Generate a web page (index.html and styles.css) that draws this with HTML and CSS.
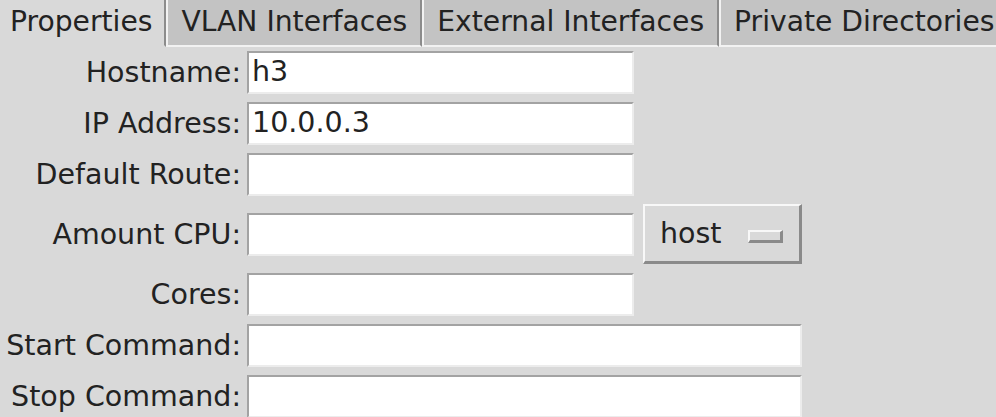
FILE: index.html
```html
<!DOCTYPE html>
<html>
<head>
<meta charset="utf-8">
<link rel="stylesheet" href="styles.css">
</head>
<body>
<div class="dialog">
  <div class="tabs">
    <div class="tab selected">Properties</div>
    <div class="tab">VLAN Interfaces</div>
    <div class="tab">External Interfaces</div>
    <div class="tab">Private Directories</div>
    <div class="tab-fill"></div>
  </div>
  <div class="form">
    <div class="label">Hostname:</div>
    <div class="entry">h3</div>
    <div class="spacer"></div>

    <div class="label">IP Address:</div>
    <div class="entry">10.0.0.3</div>
    <div class="spacer"></div>

    <div class="label">Default Route:</div>
    <div class="entry"></div>
    <div class="spacer"></div>

    <div class="label menu-row">Amount CPU:</div>
    <div class="entry menu-row"></div>
    <div class="optmenu menu-row"><span class="opt-text">host</span><span class="indicator"></span></div>

    <div class="label">Cores:</div>
    <div class="entry"></div>
    <div class="spacer"></div>

    <div class="label">Start Command:</div>
    <div class="entry wide"></div>

    <div class="label">Stop Command:</div>
    <div class="entry wide"></div>
  </div>
</div>
</body>
</html>
```

FILE: styles.css
```css
html, body {
  margin: 0;
  padding: 0;
  background: #d9d9d9;
}

body {
  width: 996px;
  height: 417px;
  overflow: hidden;
  font-family: "DejaVu Sans", sans-serif;
  font-size: 28.5px;
  color: #222;
}

.dialog {
  display: flex;
  flex-direction: column;
}

.tabs {
  display: flex;
  height: 47px;
  box-sizing: border-box;
  font-size: 28.2px;
}

.tab {
  box-sizing: border-box;
  height: 47px;
  padding: 0 13px;
  background: #c3c3c3;
  border-left: 2px solid #f2f2f2;
  border-right: 2px solid #8c8c8c;
  border-bottom: 2px solid #f2f2f2;
  line-height: 43px;
  white-space: nowrap;
}

.tab.selected {
  background: #d9d9d9;
  border-left: none;
  border-bottom-color: #d9d9d9;
  padding-left: 10px;
  padding-right: 12px;
}

.tab-fill {
  flex: 1;
  border-bottom: 2px solid #f2f2f2;
}

.form {
  display: grid;
  grid-template-columns: 247px 387px 168px;
  align-items: center;
  row-gap: 8px;
  padding-top: 4px;
}

.label {
  text-align: right;
  padding-right: 6px;
  white-space: nowrap;
}

.entry {
  box-sizing: border-box;
  height: 43px;
  background: #fff;
  border-top: 2px solid #a3a3a3;
  border-left: 2px solid #a3a3a3;
  border-bottom: 2px solid #ececec;
  border-right: 2px solid #ececec;
  padding-left: 3px;
  line-height: 38px;
  white-space: nowrap;
}

.entry.wide {
  grid-column: span 2;
}

.menu-row {
  margin-bottom: 1px;
}

.optmenu {
  box-sizing: border-box;
  margin-left: 9px;
  height: 60px;
  display: flex;
  align-items: center;
  justify-content: space-between;
  padding: 0 16px 0 15px;
  background: #d9d9d9;
  border-top: 2px solid #f8f8f8;
  border-left: 2px solid #f8f8f8;
  border-bottom: 3px solid #8a8a8a;
  border-right: 3px solid #8a8a8a;
}

.opt-text {
  line-height: 54px;
}

.indicator {
  box-sizing: border-box;
  width: 35px;
  height: 13px;
  margin-top: 5px;
  background: #d9d9d9;
  border-top: 2px solid #f8f8f8;
  border-left: 2px solid #f8f8f8;
  border-bottom: 3px solid #8a8a8a;
  border-right: 3px solid #8a8a8a;
}
```
